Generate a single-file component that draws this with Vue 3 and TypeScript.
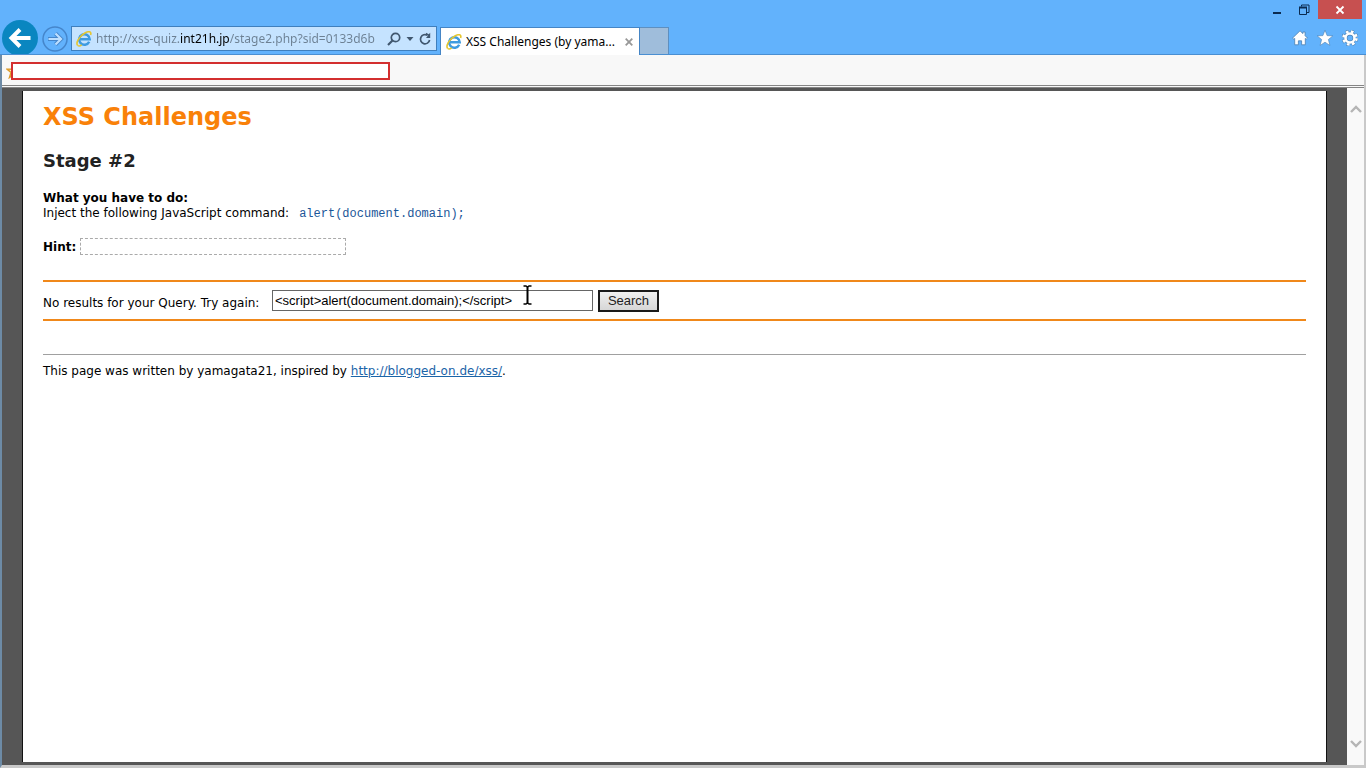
<script setup lang="ts">
import { ref } from 'vue'

const address = ref<string>('http://xss-quiz.int21h.jp/stage2.php?sid=0133d6b')
const query = ref<string>('<script>alert(document.domain);<\/script>')
const tabTitle = 'XSS Challenges (by yama...'
const command = 'alert(document.domain);'
</script>

<template>
  <div class="window">
    <header class="chrome">
      <div class="caption">
        <button class="cap" type="button" aria-label="Minimize">
          <svg width="12" height="12" viewBox="0 0 12 12"><path d="M2 9h8" stroke="#0b2b50" stroke-width="2" /></svg>
        </button>
        <button class="cap" type="button" aria-label="Restore">
          <svg width="12" height="12" viewBox="0 0 12 12" fill="none" stroke="#0b2b50">
            <path d="M1.500 3.500h7v7h-7z" /><path d="M1 3.500h8" stroke-width="2" /><path d="M3.500 2.500v-1.500h7.500v7.500h-2" />
          </svg>
        </button>
        <button class="cap close" type="button" aria-label="Close">
          <svg width="10" height="10" viewBox="0 0 10 10"><path d="M1.500 1.500l7 7M8.500 1.500l-7 7" stroke="#fff" stroke-width="1.800" /></svg>
        </button>
      </div>
      <div class="nav">
        <button class="back" type="button" aria-label="Back">
          <svg width="36" height="36" viewBox="0 0 36 36">
            <circle cx="18" cy="18" r="18" fill="#0a86c0" />
            <path d="M28.500 18H10M18 9.500L9.500 18l8.500 8.500" fill="none" stroke="#fff" stroke-width="4" />
          </svg>
        </button>
        <button class="forward" type="button" aria-label="Forward">
          <svg width="26" height="26" viewBox="0 0 26 26" fill="none">
            <circle cx="13" cy="13" r="12" stroke="#4586cb" stroke-width="1.500" />
            <path d="M6 13h13M13.500 7.500L19 13l-5.500 5.500" stroke="#4586cb" stroke-width="4" />
            <path d="M6.500 13H19M13.500 7.500L19 13l-5.500 5.500" stroke="#bcdfff" stroke-width="2.200" />
          </svg>
        </button>
        <div class="address">
          <svg class="logo" width="16" height="16" viewBox="0 0 16 16" fill="none">
            <path d="M13.200 10.800A5.300 5.300 0 1 1 13.700 8.300H4" stroke="#3e9be0" stroke-width="2.500" />
            <path d="M1.700 14.500C-.5 12 3 5.500 8.500 2.200 12.500-.2 15.800.3 14.600 4" stroke="#e5c630" stroke-width="1.600" />
            <path d="M1.700 14.500c1 .8 2.800.3 4-.6" stroke="#e5c630" stroke-width="1.500" />
          </svg>
          <input v-model="address" class="url" type="text" aria-label="Address" spellcheck="false" />
          <button type="button" aria-label="Search the web">
            <svg width="14" height="14" viewBox="0 0 14 14" fill="none" stroke="#40576f">
              <circle cx="8.500" cy="5.500" r="4.200" stroke-width="1.700" /><path d="M5.500 8.500L1 13" stroke-width="2.200" />
            </svg>
          </button>
          <button class="drop" type="button" aria-label="Show history">
            <svg width="8" height="6" viewBox="0 0 8 6"><path d="M.5 1h7L4 5z" fill="#40576f" /></svg>
          </button>
          <button type="button" aria-label="Refresh">
            <svg width="14" height="14" viewBox="0 0 14 14" fill="none">
              <path d="M9.500 3.300A4.600 4.600 0 1 0 11.600 8" stroke="#40576f" stroke-width="1.700" />
              <path d="M8 .8v1.600l2 1L8 6h4.200V.8l-1.400 1.400z" fill="#40576f" />
            </svg>
          </button>
        </div>
        <div class="tab">
          <svg class="logo" width="16" height="16" viewBox="0 0 16 16" fill="none">
            <path d="M13.200 10.800A5.300 5.300 0 1 1 13.700 8.300H4" stroke="#3e9be0" stroke-width="2.500" />
            <path d="M1.700 14.500C-.5 12 3 5.500 8.500 2.200 12.500-.2 15.800.3 14.600 4" stroke="#e5c630" stroke-width="1.600" />
            <path d="M1.700 14.500c1 .8 2.800.3 4-.6" stroke="#e5c630" stroke-width="1.500" />
          </svg>
          <span class="tab-title">{{ tabTitle }}</span>
          <button type="button" aria-label="Close tab">
            <svg width="8" height="8" viewBox="0 0 8 8"><path d="M.7.7l6.600 6.600M7.300.7L.7 7.300" stroke="#989898" stroke-width="1.800" /></svg>
          </button>
        </div>
        <button class="new-tab" type="button" aria-label="New tab"></button>
        <div class="tools">
          <button type="button" aria-label="Home">
            <svg width="16" height="16" viewBox="0 0 16 16">
              <path d="M8 .8L.6 8l1.200 1.200.9-.8v6.400H6.400v-4h3.200v4h3.700V8.400l.9.8L15.400 8l-2.300-2.300V2h-2.200v1.600z" fill="#fff" stroke="#4b7fb0" stroke-width=".8" />
            </svg>
          </button>
          <button type="button" aria-label="Favorites">
            <svg width="16" height="16" viewBox="0 0 16 16">
              <path d="M8 .2l2.100 5.400 5.700.3-4.400 3.600 1.500 5.900L8 12.200l-4.900 3.200 1.500-5.900L.2 5.900l5.700-.3z" fill="#fff" stroke="#4b7fb0" stroke-width=".6" />
            </svg>
          </button>
          <button type="button" aria-label="Tools">
            <svg width="16" height="16" viewBox="0 0 16 16" fill="none">
              <circle cx="8" cy="8" r="6.500" stroke="#4b7fb0" stroke-width="3.600" stroke-dasharray="3.100 2" />
              <circle cx="8" cy="8" r="4.500" stroke="#4b7fb0" stroke-width="3.800" />
              <circle cx="8" cy="8" r="6.500" stroke="#fff" stroke-width="2.600" stroke-dasharray="2.600 2.500" stroke-dashoffset="-.2" />
              <circle cx="8" cy="8" r="4.500" stroke="#fff" stroke-width="2.600" />
            </svg>
          </button>
        </div>
      </div>
    </header>

    <div class="favorites">
      <svg class="fav-star" width="16" height="16" viewBox="0 0 16 16">
        <path d="M8 1l2 5 5 .2-4 3.300 1.500 5L8 11.500l-4.500 3 1.500-5L1 6.200 6 6z" fill="#fff3c4" stroke="#dc9a28" stroke-width="1.500" />
      </svg>
      <div class="blank"></div>
    </div>

    <div class="viewport">
      <main class="page">
        <h1>XSS Challenges</h1>
        <h2>Stage #2</h2>
        <p class="task"><b>What you have to do:</b><br />Inject the following JavaScript command:<code>{{ command }}</code></p>
        <p class="hint"><b>Hint:</b><span class="hint-box"></span></p>
        <form class="search" @submit.prevent>
          <label for="query">No results for your Query. Try again:</label>
          <div class="field">
            <input id="query" v-model="query" type="text" spellcheck="false" />
            <svg class="cursor" width="9" height="20" viewBox="0 0 9 20" fill="none" stroke="#000">
              <path d="M.5 1H3l1.500 1L6 1h2.500M.5 19H3l1.500-1L6 19h2.500" stroke-width="1.400" /><path d="M4.500 2v16" stroke-width="2" />
            </svg>
          </div>
          <button type="submit">Search</button>
        </form>
        <footer>This page was written by yamagata21, inspired by <a href="http://blogged-on.de/xss/">http://blogged-on.de/xss/</a>.</footer>
      </main>
      <div class="scrollbar">
        <button type="button" aria-label="Scroll up">
          <svg width="12" height="8" viewBox="0 0 12 8"><path d="M1 7l5-5 5 5" fill="none" stroke="#b5b5b5" stroke-width="2.400" /></svg>
        </button>
        <button type="button" aria-label="Scroll down">
          <svg width="12" height="8" viewBox="0 0 12 8"><path d="M1 1l5 5 5-5" fill="none" stroke="#b5b5b5" stroke-width="2.400" /></svg>
        </button>
      </div>
    </div>
  </div>
</template>

<style>
body {
  margin: 0;
}
</style>

<style scoped>
* {
  box-sizing: border-box;
}
button {
  display: flex;
  align-items: center;
  justify-content: center;
  margin: 0;
  padding: 0;
  border: 0;
  background: none;
}
svg {
  display: block;
  flex: none;
}
.window {
  display: flex;
  flex-direction: column;
  min-height: 100vh;
  border-left: 2px solid #6d8ba6;
  border-right: 2px solid #c9c9c9;
  border-bottom: 3px solid #c9c9c9;
  background: #565656;
  font-family: "DejaVu Sans", Verdana, sans-serif;
  font-size: 12px;
  color: #000;
}
.chrome {
  margin: 0 -2px;
  padding: 0 4px 0 2px;
  background: #62b2fc;
  border-bottom: 1px solid #4a8fd2;
}
.caption {
  display: flex;
  justify-content: flex-end;
  height: 19px;
}
.cap {
  width: 27px;
  height: 19px;
}
.cap.close {
  width: 44px;
  margin-left: 1px;
  background: #c75050;
}
.nav {
  display: flex;
  align-items: flex-end;
  height: 35px;
  font-family: "Noto Sans", "Segoe UI", sans-serif;
}
.back {
  width: 36px;
  height: 34px;
  overflow: hidden;
  align-items: flex-start;
}
.forward {
  width: 26px;
  margin: 0 3px 2px 4px;
}
.address {
  display: flex;
  align-items: center;
  width: 366px;
  height: 25px;
  margin-bottom: 3px;
  padding: 0 4px;
  gap: 4px;
  border: 1px solid #3f7fbd;
  background: #c5e3ff;
}
.url {
  flex: 1;
  min-width: 0;
  height: 22px;
  margin-right: 1px;
  padding: 0;
  border: 0;
  outline: 0;
  font-family: inherit;
  font-size: 12px;
  color: transparent;
  background: linear-gradient(90deg, #6c8093 85px, #000 85px, #000 134px, #6c8093 134px);
  background-clip: text;
  -webkit-background-clip: text;
}
.drop {
  width: 9px;
}
.tab {
  display: flex;
  align-items: center;
  width: 200px;
  height: 28px;
  margin: 0 0 -1px 3px;
  padding: 0 6px 0 5px;
  gap: 4px;
  border: 1px solid #4585c5;
  border-bottom: 0;
  background: #fff;
}
.tab-title {
  flex: 1;
  white-space: nowrap;
}
.new-tab {
  width: 29px;
  height: 27px;
  border: 1px solid #5d8fc0;
  border-width: 1px 1px 0 0;
  background: #9fbddb;
}
.tools {
  display: flex;
  gap: 9px;
  margin: 0 4px 8px auto;
}
.favorites {
  display: flex;
  align-items: center;
  height: 33px;
  padding: 2px 4px 0;
  border-bottom: 3px double #858585;
  background: #f8f8f8;
}
.fav-star {
  margin-right: -11px;
}
.blank {
  width: 379px;
  height: 18px;
  border: 2px solid #d32f2f;
  background: #fff;
}
.viewport {
  flex: 1;
  display: flex;
}
.page {
  flex: 1;
  margin: 3px 20px 3px;
  padding: 12px 20px 20px;
  border: 1px solid #111;
  border-width: 0 1px;
  background: #fff;
}
h1,
h2,
p {
  margin: 0;
}
h1 {
  font-size: 24px;
  line-height: 28px;
  color: #f98109;
}
h2 {
  margin-top: 19px;
  font-size: 18px;
  line-height: 22px;
  color: #222;
}
.task {
  margin-top: 19px;
  line-height: 15px;
}
code {
  padding: 0 10px;
  font-family: "Liberation Mono", "Courier New", monospace;
  font-size: 12px;
  color: #1b5799;
}
.hint {
  display: flex;
  align-items: center;
  gap: 4px;
  margin-top: 16px;
}
.hint-box {
  width: 266px;
  height: 17px;
  border: 1px dashed #aaa;
}
.search {
  display: flex;
  align-items: center;
  height: 41px;
  margin-top: 25px;
  border: 2px solid #f0881a;
  border-width: 2px 0;
}
.search label {
  min-width: 224px;
  padding-top: 4px;
}
.field {
  position: relative;
  margin: 0 5px;
}
.field input {
  display: block;
  width: 321px;
  height: 21px;
  padding: 0 2px;
  border: 1px solid #666;
  border-radius: 0;
  outline: 0;
  background: #fff;
  font-family: "Liberation Sans", Arial, sans-serif;
  font-size: 13px;
  color: #000;
}
.cursor {
  position: absolute;
  left: 251px;
  top: -5px;
}
.search button {
  width: 61px;
  height: 22px;
  border: 2px solid #1a1a1a;
  background: linear-gradient(#f0f0f0, #d6d6d6);
  font-family: "Liberation Sans", Arial, sans-serif;
  font-size: 13px;
  color: #222;
}
footer {
  margin-top: 33px;
  padding-top: 9px;
  border-top: 1px solid #a0a0a0;
  line-height: 15px;
}
footer a {
  color: #1a64a8;
}
.scrollbar {
  display: flex;
  flex-direction: column;
  justify-content: space-between;
  width: 17px;
  padding: 17px 0;
  background: #f9f9f9;
}
.scrollbar button {
  width: 17px;
  height: 8px;
}
</style>
